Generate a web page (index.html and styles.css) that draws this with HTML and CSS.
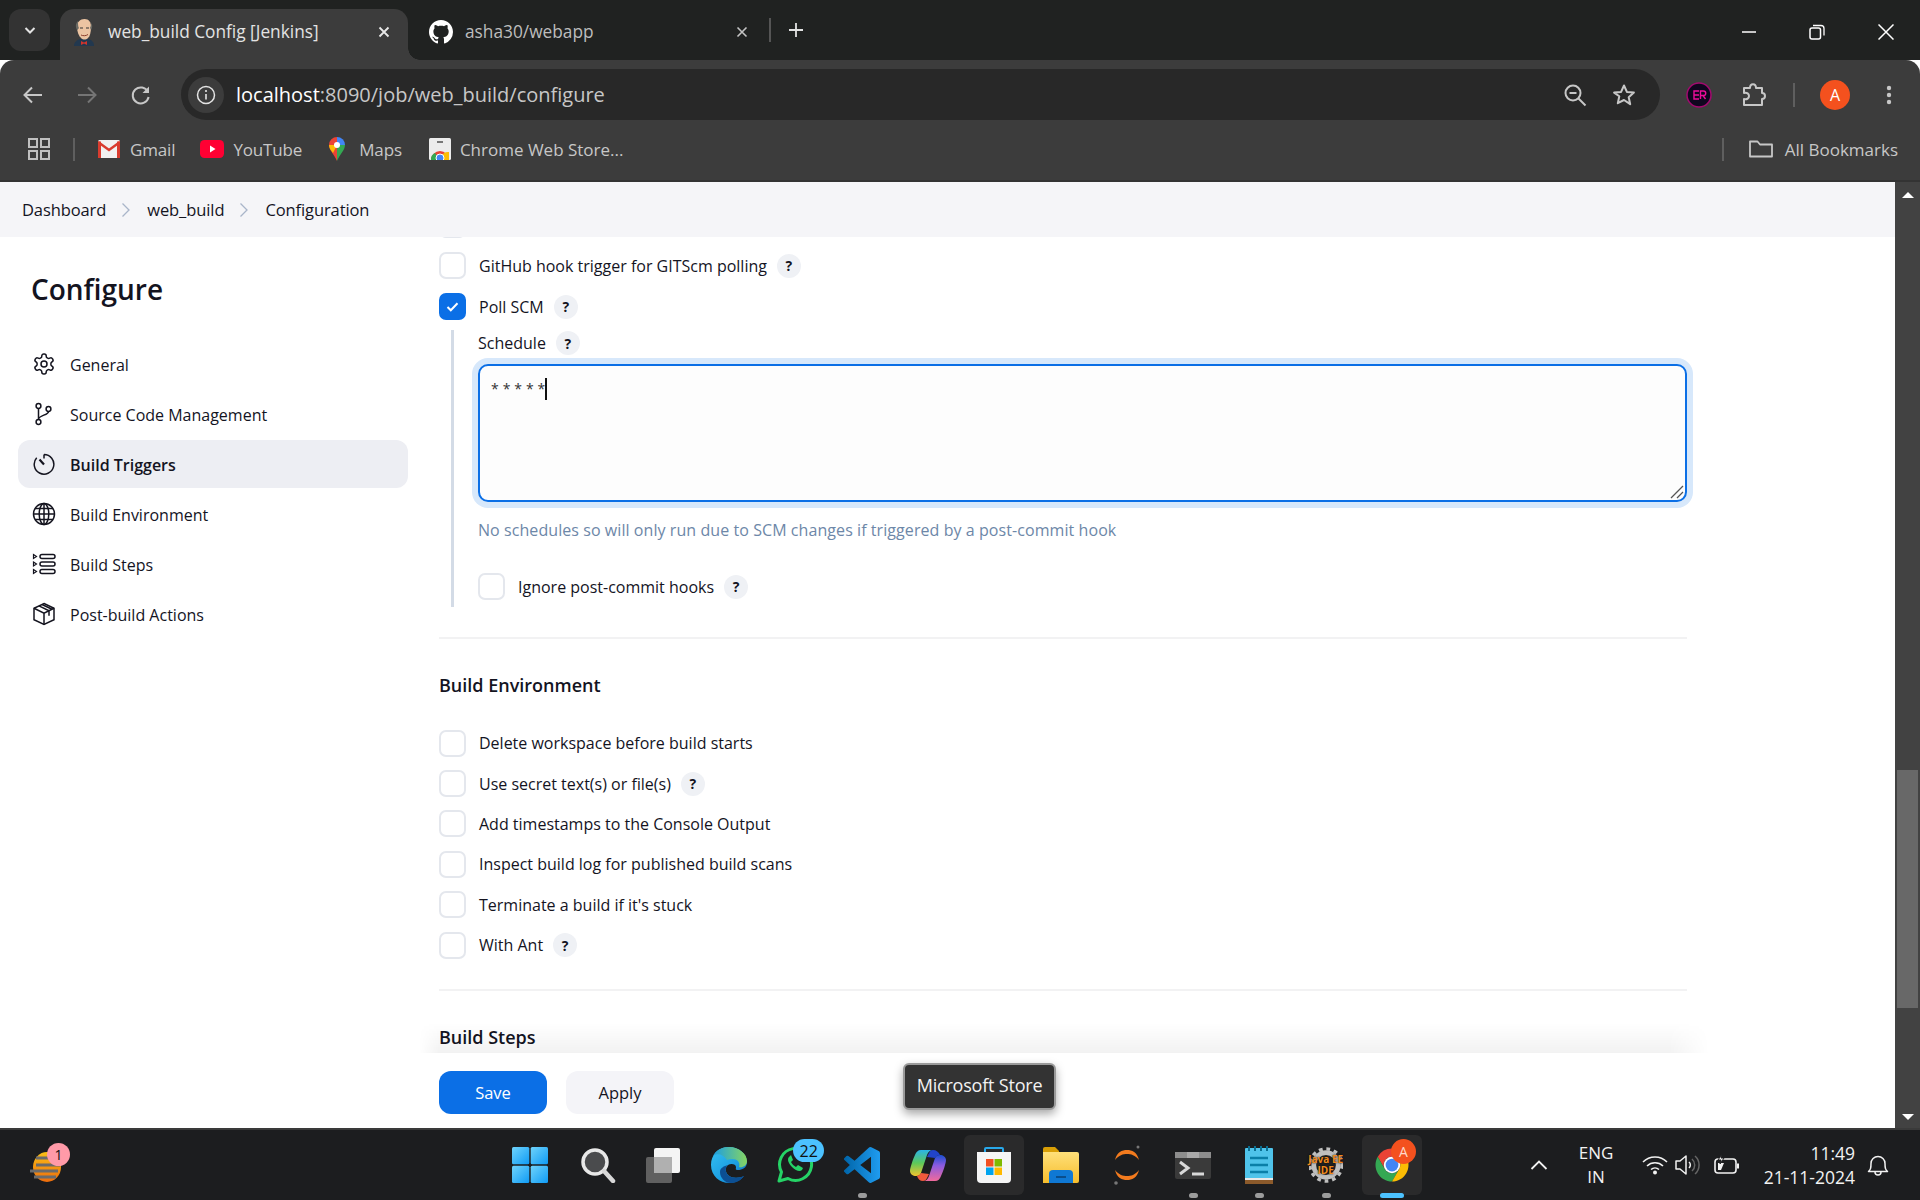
FILE: index.html
```html
<!DOCTYPE html>
<html lang="en">
<head>
    <meta charset="UTF-8">
    <title>web_build Config [Jenkins]</title>
    <link rel="stylesheet" href="styles.css">
</head>
<body>
    <svg width="0" height="0" class="defs">
        <defs>
            <linearGradient id="g-win" x1="0" y1="0" x2="1" y2="1"><stop offset="0" stop-color="#6fd3fb"/><stop offset="1" stop-color="#0f9bf5"/></linearGradient>
            <linearGradient id="g-edge" x1="0" y1="0" x2="1" y2="1"><stop offset="0" stop-color="#35c1f1"/><stop offset=".6" stop-color="#1b9de2"/><stop offset="1" stop-color="#0c59a4"/></linearGradient>
            <linearGradient id="g-edge2" x1="0" y1="0" x2="1" y2="0"><stop offset="0" stop-color="#1b9de2"/><stop offset="1" stop-color="#86d562"/></linearGradient>
            <linearGradient id="g-vs" x1="0" y1="0" x2="1" y2="0"><stop offset="0" stop-color="#0065a9"/><stop offset="1" stop-color="#1f9cf0"/></linearGradient>
            <linearGradient id="g-sun" x1="0" y1="0" x2="0" y2="1"><stop offset="0" stop-color="#fbbf16"/><stop offset="1" stop-color="#ed6c0c"/></linearGradient>
            <linearGradient id="g-co1" x1="0" y1="0" x2="0" y2="1"><stop offset="0" stop-color="#1b4fd0"/><stop offset=".4" stop-color="#8a5be0"/><stop offset="1" stop-color="#f06a9c"/></linearGradient>
            <linearGradient id="g-co2" x1="0" y1="0" x2="0" y2="1"><stop offset="0" stop-color="#2bb3e8"/><stop offset=".5" stop-color="#5cc95a"/><stop offset="1" stop-color="#f3c32e"/></linearGradient>
            <linearGradient id="g-folder" x1="0" y1="0" x2="0" y2="1"><stop offset="0" stop-color="#ffe07a"/><stop offset="1" stop-color="#f6bd2c"/></linearGradient>
        </defs>
    </svg>

    <div class="tabstrip">
        <div class="tab-search">
            <svg width="16" height="16" viewBox="0 0 16 16"><path d="M3.500 6l4.500 4.500L12.500 6" fill="none" stroke="#e3e3e3" stroke-width="2"/></svg>
        </div>
        <div class="tab tab-active">
            <svg class="favicon" width="24" height="28" viewBox="0 0 24 28">
                <path d="M2 28c0-4 3-6 6-7h8c4 1 6 3 6 7z" fill="#22384f"/>
                <path d="M9 23l3 1.500 3-1.500v4l-3-1.500L9 27z" fill="#d0342c"/>
                <path d="M5 9c0-5 3-8 7.500-8S19 4 19 9c0 5-1 9-3 11-2 2-5 2-7 0-2-2-4-6-4-11z" fill="#ecc4a2"/>
                <path d="M5 12C3 8 4 5 6 3c0 3 0 6 1 7-1 1-1.500 2-2 2zM19 12c1.500-2 1.500-5 .5-7-.5 2-1 4-1.500 5 .5.5 1 1.500 1 2z" fill="#6a6a64"/>
                <path d="M9 17c2 1 5 1 7-.5" fill="none" stroke="#8c3f2c" stroke-width="1"/>
                <path d="M8 10h3M14 10h3" stroke="#333" stroke-width="1.200"/>
            </svg>
            <span class="tab-title">web_build Config [Jenkins]</span>
            <svg class="tab-close" width="14" height="14" viewBox="0 0 14 14"><path d="M2.500 2.500l9 9M11.500 2.500l-9 9" stroke="#e8e8e8" stroke-width="1.800"/></svg>
        </div>
        <div class="tab tab-other">
            <svg class="favicon" width="24" height="24" viewBox="0 0 16 16"><path fill="#fff" d="M8 0C3.58 0 0 3.58 0 8c0 3.54 2.29 6.53 5.47 7.59.4.07.55-.17.55-.38 0-.19-.01-.82-.01-1.49-2.01.37-2.53-.49-2.69-.94-.09-.23-.48-.94-.82-1.13-.28-.15-.68-.52-.01-.53.63-.01 1.08.58 1.23.82.72 1.21 1.87.87 2.33.66.07-.52.28-.87.51-1.07-1.78-.2-3.64-.89-3.64-3.95 0-.87.31-1.59.82-2.15-.08-.2-.36-1.02.08-2.12 0 0 .67-.21 2.2.82.64-.18 1.32-.27 2-.27.68 0 1.36.09 2 .27 1.53-1.04 2.2-.82 2.2-.82.44 1.1.16 1.92.08 2.12.51.56.82 1.27.82 2.15 0 3.07-1.87 3.75-3.65 3.95.29.25.54.73.54 1.48 0 1.07-.01 1.93-.01 2.2 0 .21.15.46.55.38A8.013 8.013 0 0016 8c0-4.42-3.58-8-8-8z"/></svg>
            <span class="tab-title">asha30/webapp</span>
            <svg class="tab-close" width="14" height="14" viewBox="0 0 14 14"><path d="M2.500 2.500l9 9M11.500 2.500l-9 9" stroke="#c4c4c4" stroke-width="1.600"/></svg>
        </div>
        <div class="tab-divider"></div>
        <svg class="tab-plus" width="18" height="18" viewBox="0 0 18 18"><path d="M9 2v14M2 9h14" stroke="#e3e3e3" stroke-width="1.800"/></svg>
        <div class="win-controls">
            <div class="win-btn"><svg width="16" height="16" viewBox="0 0 16 16"><path d="M1 8h14" stroke="#fff" stroke-width="1.500"/></svg></div>
            <div class="win-btn"><svg width="16" height="16" viewBox="0 0 16 16"><rect x="1" y="4" width="10.500" height="11" rx="2" fill="none" stroke="#fff" stroke-width="1.500"/><path d="M4 1.500h8a3 3 0 0 1 3 3v7" fill="none" stroke="#fff" stroke-width="1.300"/></svg></div>
            <div class="win-btn"><svg width="16" height="16" viewBox="0 0 16 16"><path d="M.5.500l15 15M15.500.500l-15 15" stroke="#fff" stroke-width="1.500"/></svg></div>
        </div>
    </div>

    <div class="toolbar">
        <div class="nav-btn"><svg width="22" height="22" viewBox="0 0 22 22"><path d="M20 11H3M10 3.500L2.500 11l7.500 7.500" fill="none" stroke="#c7c7c7" stroke-width="2"/></svg></div>
        <div class="nav-btn"><svg width="22" height="22" viewBox="0 0 22 22"><path d="M2 11h17M12 3.500l7.500 7.500-7.500 7.500" fill="none" stroke="#757575" stroke-width="2"/></svg></div>
        <div class="nav-btn"><svg width="22" height="22" viewBox="0 0 22 22"><path d="M18 8a8 8 0 1 0 .6 5" fill="none" stroke="#c7c7c7" stroke-width="2"/><path d="M19 2.500V9h-6.500z" fill="#c7c7c7"/></svg></div>
        <div class="omnibox">
            <div class="site-chip"><svg width="20" height="20" viewBox="0 0 20 20"><circle cx="10" cy="10" r="8.500" fill="none" stroke="#e3e3e3" stroke-width="1.500"/><path d="M10 9v5.500" stroke="#e3e3e3" stroke-width="1.600"/><circle cx="10" cy="6" r="1.100" fill="#e3e3e3"/></svg></div>
            <div class="url"><span class="url-host">localhost</span>:8090/job/web_build/configure</div>
            <svg class="omni-icon" width="24" height="24" viewBox="0 0 24 24"><circle cx="10" cy="10" r="7.500" fill="none" stroke="#c7c7c7" stroke-width="2"/><path d="M6.500 10h7" stroke="#c7c7c7" stroke-width="2"/><path d="M15.500 15.500l7 7" stroke="#c7c7c7" stroke-width="2"/></svg>
            <svg class="omni-icon omni-star" width="24" height="24" viewBox="0 0 24 24"><path d="M12 2.500l2.900 6.400 7 .7-5.200 4.700 1.500 6.900L12 17l-6.200 3.200 1.500-6.900L2.100 9.600l7-.7z" fill="none" stroke="#c7c7c7" stroke-width="2" stroke-linejoin="round"/></svg>
        </div>
        <svg class="ext-icon" width="26" height="26" viewBox="0 0 26 26"><circle cx="13" cy="13" r="12" fill="#10061f" stroke="#a3096f" stroke-width="1.500"/><path d="M13 9H8v8h5M8 13h5M14.500 17V9h3a2 2 0 0 1 0 4.500h-3M17 13.500l2.500 3.500" fill="none" stroke="#ee0c9a" stroke-width="1.400"/></svg>
        <svg class="puzzle-icon" width="26" height="26" viewBox="0 0 26 26"><path d="M3 6h6c0-5 6-5 6 0h6v5c4 0 4 6 0 6v6H3v-6c3 1 5-1 5-3s-2-4-5-3z" fill="none" stroke="#c7c7c7" stroke-width="2" stroke-linejoin="round"/></svg>
        <div class="toolbar-divider"></div>
        <div class="avatar">A</div>
        <svg class="dots-icon" width="24" height="24" viewBox="0 0 24 24"><circle cx="12" cy="5" r="2.200" fill="#c7c7c7"/><circle cx="12" cy="12" r="2.200" fill="#c7c7c7"/><circle cx="12" cy="19" r="2.200" fill="#c7c7c7"/></svg>
    </div>

    <div class="bookmarks">
        <svg width="22" height="22" viewBox="0 0 22 22"><g fill="none" stroke="#c0c0c0" stroke-width="2"><rect x="1" y="1" width="8" height="8"/><rect x="13" y="1" width="8" height="8"/><rect x="1" y="13" width="8" height="8"/><rect x="13" y="13" width="8" height="8"/></g></svg>
        <div class="bm-divider"></div>
        <div class="bm bm-gmail">
            <svg width="22" height="18" viewBox="0 0 22 18"><rect width="22" height="18" rx="1.500" fill="#f1f1f1"/><path d="M0 2l11 8 11-8" fill="none" stroke="#d93c2f" stroke-width="2.500"/><path d="M1.500 1.500V18M20.500 1.500V18" stroke="#d93c2f" stroke-width="3"/></svg>
            <span>Gmail</span>
        </div>
        <div class="bm bm-youtube">
            <svg width="24" height="18" viewBox="0 0 24 18"><rect width="24" height="18" rx="4.500" fill="#ff0033"/><path d="M10 5.500l5.500 3.500-5.500 3.500z" fill="#fff"/></svg>
            <span>YouTube</span>
        </div>
        <div class="bm bm-maps">
            <svg width="16" height="24" viewBox="0 0 16 24"><path d="M8 0a8 8 0 0 0-8 8c0 5 5 9 8 16z" fill="#ea4335"/><path d="M8 0a8 8 0 0 1 8 8L8 8z" fill="#4285f4"/><path d="M16 8c0 5-5 9-8 16V8z" fill="#34a853"/><path d="M0 8c0 3 2 5.500 4 8l4-8z" fill="#fbbc04"/><circle cx="8" cy="8" r="3" fill="#fff"/></svg>
            <span>Maps</span>
        </div>
        <div class="bm bm-store">
            <svg width="22" height="22" viewBox="0 0 22 22"><rect width="22" height="22" rx="1.500" fill="#ececec"/><rect x="8" y="3" width="6" height="2" fill="#777"/><path d="M2 22a9 9 0 0 1 18 0z" fill="#ea4335"/><path d="M12 22a7 7 0 0 1 8-8v8z" fill="#fbbc04"/><path d="M2 22a7 7 0 0 1 4-7l5 7z" fill="#34a853"/><circle cx="11" cy="20" r="4" fill="#4285f4" stroke="#fff"/></svg>
            <span>Chrome Web Store...</span>
        </div>
        <div class="bm-divider bm-divider-right"></div>
        <div class="bm bm-all">
            <svg width="24" height="18" viewBox="0 0 24 18"><path d="M1 16.500V1.500h7.500l2.500 3h12v12z" fill="none" stroke="#c7c7c7" stroke-width="1.800" stroke-linejoin="round"/></svg>
            <span>All Bookmarks</span>
        </div>
    </div>

    <div class="page">
        <div class="page-main">
            <div class="breadcrumb">
                <span>Dashboard</span>
                <svg class="crumb-sep" width="10" height="16" viewBox="0 0 10 16"><path d="M1.500 1.500L8 8l-6.500 6.500" fill="none" stroke="#a9b5c9" stroke-width="1.300"/></svg>
                <span>web_build</span>
                <svg class="crumb-sep" width="10" height="16" viewBox="0 0 10 16"><path d="M1.500 1.500L8 8l-6.500 6.500" fill="none" stroke="#a9b5c9" stroke-width="1.300"/></svg>
                <span>Configuration</span>
            </div>
            <div class="page-body">
                <aside class="sidebar">
                    <h1>Configure</h1>
                    <nav class="side-nav">
                        <a class="side-item">
                            <svg width="24" height="24" viewBox="0 0 24 24" class="side-icon"><path d="M12.220 2h-.44a2 2 0 0 0-2 2v.18a2 2 0 0 1-1 1.730l-.43.25a2 2 0 0 1-2 0l-.15-.08a2 2 0 0 0-2.730.73l-.22.38a2 2 0 0 0 .73 2.730l.15.1a2 2 0 0 1 1 1.720v.51a2 2 0 0 1-1 1.740l-.15.09a2 2 0 0 0-.73 2.730l.22.38a2 2 0 0 0 2.730.73l.15-.08a2 2 0 0 1 2 0l.43.25a2 2 0 0 1 1 1.730V20a2 2 0 0 0 2 2h.44a2 2 0 0 0 2-2v-.18a2 2 0 0 1 1-1.730l.43-.25a2 2 0 0 1 2 0l.15.08a2 2 0 0 0 2.730-.73l.22-.39a2 2 0 0 0-.73-2.730l-.15-.08a2 2 0 0 1-1-1.740v-.5a2 2 0 0 1 1-1.740l.15-.09a2 2 0 0 0 .73-2.730l-.22-.38a2 2 0 0 0-2.730-.73l-.15.08a2 2 0 0 1-2 0l-.43-.25a2 2 0 0 1-1-1.730V4a2 2 0 0 0-2-2z"/><circle cx="12" cy="12" r="3"/></svg>
                            <span>General</span>
                        </a>
                        <a class="side-item">
                            <svg width="24" height="24" viewBox="0 0 24 24" class="side-icon"><circle cx="6.500" cy="4" r="2.400"/><circle cx="6.500" cy="20" r="2.400"/><circle cx="16.500" cy="7" r="2.400"/><path d="M6.500 6.400v11.200M16.500 9.400c0 4-10 3.500-10 8.200"/></svg>
                            <span>Source Code Management</span>
                        </a>
                        <a class="side-item side-item-active">
                            <svg width="24" height="24" viewBox="0 0 24 24" class="side-icon"><path d="M12 2.500a9.800 9.800 0 1 1-7.300 3.300M12 2.500v4"/><path d="M12 12.500L7.500 7.500" stroke-width="2.200"/></svg>
                            <span>Build Triggers</span>
                        </a>
                        <a class="side-item">
                            <svg width="24" height="24" viewBox="0 0 24 24" class="side-icon"><circle cx="12" cy="12" r="10.500"/><ellipse cx="12" cy="12" rx="4.800" ry="10.500"/><path d="M12 1.500v21M1.500 12h21M3 6.500h18M3 17.500h18"/></svg>
                            <span>Build Environment</span>
                        </a>
                        <a class="side-item">
                            <svg width="24" height="24" viewBox="0 0 24 24" class="side-icon"><rect x="8" y="2.500" width="15" height="4" rx="2"/><rect x="8" y="10" width="15" height="4" rx="2"/><rect x="8" y="17.500" width="15" height="4" rx="2"/><path d="M1.500 2.500l3 2-3 2zM1.500 10l3 2-3 2zM1.500 17.500l3 2-3 2z" stroke-width="1.200"/></svg>
                            <span>Build Steps</span>
                        </a>
                        <a class="side-item">
                            <svg width="24" height="24" viewBox="0 0 24 24" class="side-icon"><path d="M12 1.500l10 4.800v11.400L12 22.500 2 17.700V6.300z"/><path d="M2 6.300l10 4.800 10-4.800M12 11.100v11.400M7 3.900l10 4.800v5M10 2.500l10 4.800"/></svg>
                            <span>Post-build Actions</span>
                        </a>
                    </nav>
                </aside>

                <div class="content-col">
                    <main class="content">
                        <div class="check-row"><span class="check"></span></div>
                        <div class="check-row"><span class="check"></span><span>GitHub hook trigger for GITScm polling</span><span class="help">?</span></div>
                        <div class="check-row"><span class="check check-on"><svg width="15" height="15" viewBox="0 0 15 15"><path d="M2.500 8l3.300 3.300 6.700-7" fill="none" stroke="#fff" stroke-width="2"/></svg></span><span>Poll SCM</span><span class="help">?</span></div>

                        <div class="nested">
                            <div class="field-label"><span>Schedule</span><span class="help">?</span></div>
                            <div class="schedule-box">
                                <span class="schedule-text">* * * * *</span><span class="caret"></span>
                                <svg class="resize-grip" width="14" height="14" viewBox="0 0 14 14"><path d="M1 13L13 1M7 13l6-6" stroke="#555" stroke-width="1.300"/></svg>
                            </div>
                            <div class="hint">No schedules so will only run due to SCM changes if triggered by a post-commit hook</div>
                            <div class="check-row ignore-row"><span class="check"></span><span>Ignore post-commit hooks</span><span class="help">?</span></div>
                        </div>

                        <hr class="section-line line-first">
                        <h2>Build Environment</h2>
                        <div class="env-list">
                            <div class="check-row"><span class="check"></span><span>Delete workspace before build starts</span></div>
                            <div class="check-row"><span class="check"></span><span>Use secret text(s) or file(s)</span><span class="help">?</span></div>
                            <div class="check-row"><span class="check"></span><span>Add timestamps to the Console Output</span></div>
                            <div class="check-row"><span class="check"></span><span>Inspect build log for published build scans</span></div>
                            <div class="check-row"><span class="check"></span><span>Terminate a build if it's stuck</span></div>
                            <div class="check-row"><span class="check"></span><span>With Ant</span><span class="help">?</span></div>
                        </div>
                        <hr class="section-line">
                        <h2>Build Steps</h2>
                    </main>
                    <footer class="save-bar">
                        <button class="btn btn-save">Save</button>
                        <button class="btn btn-apply">Apply</button>
                    </footer>
                </div>
            </div>
        </div>
        <div class="scrollbar">
            <span class="arrow-up"></span>
            <div class="scroll-track"><div class="scroll-thumb"></div></div>
            <span class="arrow-down"></span>
        </div>
        <div class="tooltip">Microsoft Store</div>
    </div>

    <div class="taskbar">
        <div class="widget">
            <svg width="36" height="34" viewBox="0 0 36 34"><ellipse cx="19" cy="19" rx="14" ry="15" fill="url(#g-sun)"/><g stroke="#6b6b6b" stroke-width="3"><path d="M8 10h16M8 17h24M2 23h28M6 29h22"/></g></svg>
            <span class="widget-badge">1</span>
        </div>
        <div class="task-apps">
            <div class="task-app">
                <svg width="36" height="36" viewBox="0 0 36 36"><g fill="url(#g-win)"><rect x="0" y="0" width="17.300" height="17.300" rx="1.500"/><rect x="18.700" y="0" width="17.300" height="17.300" rx="1.500"/><rect x="0" y="18.700" width="17.300" height="17.300" rx="1.500"/><rect x="18.700" y="18.700" width="17.300" height="17.300" rx="1.500"/></g></svg>
            </div>
            <div class="task-app task-search-icon">
                <svg width="36" height="36" viewBox="0 0 36 36"><circle cx="15" cy="15" r="12" fill="#4a4b4d" stroke="#e8e8e8" stroke-width="3.500"/><path d="M24 24l9 10" stroke="#d8d8d8" stroke-width="4.500" stroke-linecap="round"/></svg>
            </div>
            <div class="task-app">
                <svg width="36" height="36" viewBox="0 0 36 36"><rect x="1" y="10" width="26" height="26" rx="2" fill="#606060"/><rect x="9" y="1" width="26" height="25" rx="2" fill="#f4f4f4"/><rect x="9" y="10" width="18" height="16" fill="#b0b0b0"/></svg>
            </div>
            <div class="task-app">
                <svg width="38" height="38" viewBox="0 0 38 38"><path d="M19 1C8 1 1 9 1 19c0 11 9 18 18 18 7 0 12-3 15-7-4 2-12 3-16-1-3-3-3-8 0-10 3-2 8-1 8 2 0 2-1 3 2 3 4 0 9-2 9-8C37 8 29 1 19 1z" fill="url(#g-edge)"/><path d="M17 14c8-3 14 1 12 7 3 1 8-1 8-6C37 8 29 1 19 1 12 1 6 4 3 10c4-3 10-2 14 4z" fill="url(#g-edge2)"/><path d="M10 26c0 6 5 11 11 11 6 0 10-3 13-7-4 2-12 3-16-1-3-3-3-8 0-10-4 1-8 3-8 7z" fill="#0c4f93"/></svg>
            </div>
            <div class="task-app">
                <svg width="38" height="38" viewBox="0 0 38 38"><path d="M3 35l2.500-9A16 16 0 1 1 12 32.500z" fill="none" stroke="#25d366" stroke-width="3" stroke-linejoin="round"/><path d="M13 11c-2 2-1 6 3 10s8 5 10 3l1-2-5-3-2 2c-2-1-4-3-5-5l2-2-2-5z" fill="#25d366"/></svg>
                <span class="task-badge">22</span>
            </div>
            <div class="task-app task-open">
                <svg width="36" height="36" viewBox="0 0 24 24"><path fill="url(#g-vs)" d="M23.150 2.587L18.210.21a1.494 1.494 0 0 0-1.705.29l-9.460 8.630-4.120-3.128a.999.999 0 0 0-1.276.057L.327 7.261A1 1 0 0 0 .326 8.740L3.899 12 .326 15.260a1 1 0 0 0 .001 1.479L1.650 17.940a.999.999 0 0 0 1.276.057l4.120-3.128 9.460 8.630a1.492 1.492 0 0 0 1.704.29l4.942-2.377A1.500 1.500 0 0 0 24 20.060V3.939a1.500 1.500 0 0 0-.85-1.352zm-5.146 14.861L10.826 12l7.178-5.448v10.896z"/></svg>
            </div>
            <div class="task-app">
                <svg width="36" height="33" viewBox="0 0 36 33"><path d="M11 1h12c-3 0-5 2-6 5l-6 18c-1 2-2 3-5 3-3 0-6-2-6-5 0-3 3-12 5-16 1-3 3-5 6-5z" fill="url(#g-co2)"/><path d="M25 32H13c3 0 5-2 6-5l6-18c1-2 2-3 5-3 3 0 6 2 6 5 0 3-3 12-5 16-1 3-3 5-6 5z" fill="url(#g-co1)"/><path d="M23 1c-2 0-3 1-4 3l-2 4 8 1c1-2 3-3 5-3-1-3-4-5-7-5z" fill="#2144c8"/><path d="M13 32c2 0 3-1 4-3l2-4-8-1c-1 2-3 3-4 3 1 3 3 5 6 5z" fill="#f0593c"/></svg>
            </div>
            <div class="task-app task-active">
                <svg width="36" height="38" viewBox="0 0 36 38"><path d="M9 6V3a1 1 0 0 1 1-1h16a1 1 0 0 1 1 1v3" fill="none" stroke="#28a8ea" stroke-width="2"/><path d="M1 6h34v27a4 4 0 0 1-4 4H5a4 4 0 0 1-4-4z" fill="#f5f5f5"/><rect x="10" y="13" width="7.500" height="7.500" fill="#f25022"/><rect x="18.500" y="13" width="7.500" height="7.500" fill="#7fba00"/><rect x="10" y="21.500" width="7.500" height="7.500" fill="#00a4ef"/><rect x="18.500" y="21.500" width="7.500" height="7.500" fill="#ffb900"/></svg>
            </div>
            <div class="task-app">
                <svg width="36" height="36" viewBox="0 0 36 36"><path d="M0 2a2 2 0 0 1 2-2h10l4 4v10H0z" fill="#d99f06"/><path d="M0 5h34a2 2 0 0 1 2 2v27a2 2 0 0 1-2 2H0z" fill="url(#g-folder)"/><path d="M6 36v-9a4 4 0 0 1 4-4h16a4 4 0 0 1 4 4v9z" fill="#0f78d4"/><path d="M13 30h10" stroke="#0a4e8d" stroke-width="2"/></svg>
            </div>
            <div class="task-app">
                <svg width="30" height="40" viewBox="0 0 30 40"><path d="M3 15C5 7 10 5 15 5s10 2 12 10c-4-5-8-6-12-6S7 10 3 15zM3 25c2 8 7 10 12 10s10-2 12-10c-4 5-8 6-12 6S7 30 3 25z" fill="#f37b1e"/><circle cx="26" cy="2" r="1.500" fill="#777"/><circle cx="4" cy="38" r="1.800" fill="#777"/></svg>
            </div>
            <div class="task-app task-open">
                <svg width="36" height="27" viewBox="0 0 36 27"><rect width="36" height="27" rx="2" fill="#3a3a3a"/><rect width="36" height="6" fill="#8d8d8d"/><rect x="12" width="12" height="6" fill="#a9a9a9"/><path d="M5 10l8 6-8 6" fill="none" stroke="#d8d8d8" stroke-width="3"/><path d="M17 22h12" stroke="#d8d8d8" stroke-width="3"/></svg>
            </div>
            <div class="task-app task-open">
                <svg width="28" height="38" viewBox="0 0 28 38"><rect y="2" width="28" height="32" rx="1" fill="#4fc3ea"/><rect y="33" width="28" height="5" fill="#8b5a2b"/><rect y="32" width="28" height="2" fill="#e8e8e8"/><path d="M5 12h18M5 19h18M5 26h18" stroke="#0a7fa8" stroke-width="2.500"/><path d="M4 0v5M10 0v5M16 0v5M22 0v5" stroke="#0a6f92" stroke-width="2"/></svg>
            </div>
            <div class="task-app task-open">
                <svg width="34" height="36" viewBox="0 0 36 38"><circle cx="18" cy="19" r="13" fill="#222" stroke="#bfbfbf" stroke-width="5"/><circle cx="18" cy="19" r="17" fill="none" stroke="#bfbfbf" stroke-width="3.500" stroke-dasharray="4 4"/></svg>
                <span class="java-label">Java EE<br>IDE</span>
            </div>
            <div class="task-app task-active task-chrome">
                <svg width="36" height="36" viewBox="0 0 48 48"><path d="M24 2A22 22 0 0 0 4.950 13l9.520 16.500A11 11 0 0 1 24 13h19.050A22 22 0 0 0 24 2z" fill="#ea4335"/><path d="M4.950 13A22 22 0 0 0 24 46l9.530-16.500a11 11 0 0 1-19.060 0z" fill="#34a853"/><path d="M43.050 13H24a11 11 0 0 1 9.530 16.500L24 46a22 22 0 0 0 19.050-33z" fill="#fbbc04"/><circle cx="24" cy="24" r="11" fill="#fff"/><circle cx="24" cy="24" r="8.500" fill="#4285f4"/></svg>
                <span class="chrome-badge">A</span>
            </div>
        </div>
        <div class="tray">
            <svg class="tray-chevron" width="18" height="12" viewBox="0 0 18 12"><path d="M1.500 10L9 2.500 16.500 10" fill="none" stroke="#f2f2f2" stroke-width="1.800"/></svg>
            <div class="tray-lang">ENG<br>IN</div>
            <svg class="tray-wifi" width="26" height="20" viewBox="0 0 26 20"><g fill="none" stroke="#f2f2f2" stroke-width="1.600"><path d="M1 7a17 17 0 0 1 24 0"/><path d="M5 11a11.500 11.500 0 0 1 16 0"/><path d="M9 14.500a6 6 0 0 1 8 0"/></g><circle cx="13" cy="17.500" r="2" fill="#f2f2f2"/></svg>
            <svg class="tray-vol" width="26" height="22" viewBox="0 0 26 22"><path d="M1 7h4l6-5v18l-6-5H1z" fill="none" stroke="#f2f2f2" stroke-width="1.500" stroke-linejoin="round"/><path d="M14 8a4 4 0 0 1 0 6" fill="none" stroke="#f2f2f2" stroke-width="1.500"/><path d="M17 5a8 8 0 0 1 0 12M20 2a12 12 0 0 1 0 18" fill="none" stroke="#666" stroke-width="1.500"/></svg>
            <svg class="tray-batt" width="26" height="22" viewBox="0 0 26 22"><rect x="1" y="5" width="21" height="14" rx="3" fill="none" stroke="#f2f2f2" stroke-width="1.600"/><path d="M23 9.500h2v5h-2z" fill="#f2f2f2"/><path d="M4 16V9h6l-3 7z" fill="#f2f2f2"/><path d="M8 0L4 6h3l-1 4 4-6H7z" fill="#f2f2f2" stroke="#1c1d1f"/></svg>
            <div class="tray-clock">11:49<br>21-11-2024</div>
            <svg class="tray-bell" width="22" height="24" viewBox="0 0 22 24"><path d="M1.500 18.500c2-2 2.500-3 2.500-8a7 7 0 0 1 14 0c0 5 .5 6 2.500 8z" fill="none" stroke="#f2f2f2" stroke-width="1.500" stroke-linejoin="round"/><path d="M8 19a3 3 0 0 0 6 0" fill="none" stroke="#f2f2f2" stroke-width="1.500"/></svg>
        </div>
    </div>
</body>
</html>
```

FILE: styles.css
```css
* {
    box-sizing: border-box;
}

html, body {
    margin: 0;
    padding: 0;
}

body {
    width: 1920px;
    height: 1200px;
    overflow: hidden;
    display: flex;
    flex-direction: column;
    font-family: "Open Sans", "Noto Sans", sans-serif;
    font-size: 16px;
    color: #14141f;
    background-color: #fff;
}

.defs {
    position: absolute;
}

/* browser chrome */
.tabstrip {
    height: 60px;
    flex: none;
    display: flex;
    align-items: flex-end;
    padding-left: 9px;
    background-color: #202221;
}

.tab-search {
    width: 41px;
    height: 42px;
    margin-bottom: 9px;
    display: flex;
    align-items: center;
    justify-content: center;
    background-color: #333;
    border-radius: 12px;
}

.tab {
    height: 51px;
    padding-bottom: 6px;
    display: flex;
    align-items: center;
    font-size: 17.300px;
}

.tab-active {
    width: 348px;
    margin-left: 10px;
    padding-left: 12px;
    padding-right: 17px;
    position: relative;
    color: #e3e3e3;
    background-color: #3c3c3c;
    border-radius: 14px 14px 0 0;
}

.tab-active::after {
    content: "";
    position: absolute;
    right: -12px;
    bottom: 0;
    width: 12px;
    height: 12px;
    background: radial-gradient(circle at 100% 0, transparent 11.500px, #3c3c3c 12px);
}

.tab-other {
    width: 358px;
    padding-left: 21px;
    padding-right: 17px;
    color: #bdbdbd;
}

.tab-title {
    margin-left: 12px;
    flex: 1;
}

.tab-divider {
    width: 2px;
    height: 24px;
    margin: 0 0 18px 3px;
    background-color: #555;
}

.tab-plus {
    margin: 0 0 21px 16px;
}

.win-controls {
    margin-left: auto;
    align-self: stretch;
    display: flex;
}

.win-btn {
    width: 68px;
    padding: 4px 0 0 1px;
    display: flex;
    align-items: center;
    justify-content: center;
}

.win-btn:last-child {
    width: 70px;
}

.toolbar {
    height: 60px;
    flex: none;
    display: flex;
    align-items: center;
    padding: 9px 0 0 6px;
    background-color: #3c3c3c;
    border-radius: 14px 14px 0 0;
}

.nav-btn {
    width: 54px;
    display: flex;
    justify-content: center;
}

.omnibox {
    width: 1479px;
    height: 51px;
    margin-left: 13px;
    padding: 0 24px 0 7px;
    display: flex;
    align-items: center;
    background-color: #282828;
    border-radius: 26px;
}

.site-chip {
    width: 36px;
    height: 36px;
    display: flex;
    align-items: center;
    justify-content: center;
    background-color: #3c3c3c;
    border-radius: 50%;
}

.url {
    margin-left: 12px;
    flex: 1;
    font-size: 20px;
    color: #c7c7c7;
}

.url-host {
    color: #fff;
}

.omni-star {
    margin-left: 25px;
}

.ext-icon {
    margin-left: 26px;
}

.puzzle-icon {
    margin-left: 29px;
}

.toolbar-divider {
    width: 2px;
    height: 24px;
    margin-left: 26px;
    background-color: #5f5f5f;
}

.avatar {
    width: 30px;
    height: 30px;
    margin-left: 25px;
    display: flex;
    align-items: center;
    justify-content: center;
    font-size: 16px;
    color: #fff;
    background-color: #f4511e;
    border-radius: 50%;
}

.dots-icon {
    margin-left: 27px;
}

.bookmarks {
    height: 62px;
    flex: none;
    display: flex;
    align-items: center;
    padding: 0 22px 2px 28px;
    font-size: 17px;
    letter-spacing: -0.15px;
    color: #c7c7c7;
    background-color: #3c3c3c;
    border-bottom: 2px solid #333;
}

.bm {
    display: flex;
    align-items: center;
    gap: 10px;
}

.bm-divider {
    width: 2px;
    height: 23px;
    margin: 0 23px;
    background-color: #5f5f5f;
}

.bm-youtube {
    margin-left: 25px;
    gap: 9px;
}

.bm-maps {
    margin-left: 27px;
    gap: 14px;
}

.bm-store {
    margin-left: 27px;
    gap: 9px;
    letter-spacing: 0;
}

.bm-divider-right {
    margin-left: auto;
    margin-right: 25px;
}

.bm-all {
    gap: 12px;
    letter-spacing: 0;
}

/* page */
.page {
    flex: 1;
    min-height: 0;
    display: flex;
    position: relative;
    overflow: hidden;
}

.page-main {
    flex: 1;
    min-width: 0;
    display: flex;
    flex-direction: column;
}

.breadcrumb {
    height: 55px;
    flex: none;
    display: flex;
    align-items: center;
    padding-left: 22px;
    font-size: 16.500px;
    font-weight: 500;
    letter-spacing: -0.1px;
    background-color: #f5f5f8;
}

.crumb-sep {
    margin: 0 16px 0 15px;
}

.page-body {
    flex: 1;
    min-height: 0;
    display: flex;
}

.sidebar {
    width: 439px;
    flex: none;
    padding: 32px 31px 0 18px;
}

h1 {
    margin: 0 0 31px 13px;
    font-size: 28px;
    line-height: 40px;
    font-weight: 600;
}

.side-nav {
    display: flex;
    flex-direction: column;
    gap: 2px;
}

.side-item {
    height: 48px;
    display: flex;
    align-items: center;
    gap: 13px;
    padding-left: 15px;
    border-radius: 12px;
}

.side-item span {
    margin-top: 2px;
}

.side-item-active {
    font-weight: 600;
    background-color: #edeef3;
}

.side-icon {
    margin-left: -1px;
    margin-right: 1px;
    fill: none;
    stroke: #14141f;
    stroke-width: 1.500;
}

.content-col {
    flex: 1;
    min-width: 0;
    display: flex;
    flex-direction: column;
}

.content {
    flex: 1;
    min-height: 0;
    overflow: hidden;
    padding-right: 208px;
}

.check-row {
    height: 41px;
    display: flex;
    align-items: center;
}

.content > .check-row:first-child {
    margin-top: -33px;
}

.check {
    width: 27px;
    height: 27px;
    flex: none;
    margin-right: 13px;
    display: flex;
    align-items: center;
    justify-content: center;
    background-color: #fff;
    border: 2px solid #e4e7ed;
    border-radius: 7px;
}

.check-on {
    background-color: #0b6fe6;
    border-color: #0b6fe6;
}

.help {
    width: 24px;
    height: 24px;
    flex: none;
    margin-left: 10px;
    display: flex;
    align-items: center;
    justify-content: center;
    font-size: 14px;
    font-weight: 700;
    background-color: #eff1f5;
    border-radius: 50%;
}

.nested {
    margin: 3px 0 0 12px;
    padding: 1px 0 0 24px;
    border-left: 3px solid #d3dbe6;
}

.field-label {
    height: 24px;
    display: flex;
    align-items: center;
}

.schedule-box {
    height: 138px;
    margin-top: 9px;
    padding: 12px 11px;
    position: relative;
    display: flex;
    align-items: flex-start;
    background-color: #fdfdfd;
    border: 2px solid #0b6fe6;
    border-radius: 10px;
    box-shadow: 0 0 0 6px #d7e8fb;
}

.schedule-text {
    font-size: 14px;
    line-height: 22px;
    word-spacing: 0.300px;
    color: #333;
}

.caret {
    width: 1.500px;
    height: 22px;
    background-color: #111;
}

.resize-grip {
    position: absolute;
    right: 1px;
    bottom: 1px;
}

.hint {
    height: 22px;
    margin-top: 17px;
    line-height: 22px;
    letter-spacing: 0.07px;
    color: #6d87a8;
}

.ignore-row {
    margin-top: 25px;
}

.section-line {
    height: 2px;
    margin: 24px 0 0;
    background-color: #f2f2f3;
    border: none;
}

.line-first {
    margin-top: 30px;
}

h2 {
    margin: 33px 0 0;
    font-size: 18px;
    line-height: 26px;
    font-weight: 600;
}

.env-list {
    margin-top: 25px;
}

.env-list .check-row {
    height: 40.400px;
}

.save-bar {
    height: 75px;
    flex: none;
    display: flex;
    align-items: center;
    gap: 19px;
    padding-top: 3px;
    position: relative;
    background-color: #fff;
}

.save-bar::before {
    content: "";
    position: absolute;
    top: -30px;
    left: -20px;
    width: 1290px;
    height: 30px;
    background: linear-gradient(to bottom, rgba(0, 0, 0, 0), rgba(0, 0, 0, 0.05));
    -webkit-mask-image: linear-gradient(to right, transparent, #000 20px, #000 1250px, transparent);
}

.btn {
    width: 108px;
    height: 43px;
    font-family: inherit;
    font-size: 16.500px;
    border: none;
    border-radius: 12px;
}

.btn-save {
    color: #fff;
    background-color: #0b6fe6;
}

.btn-apply {
    color: #14141f;
    background-color: #f4f4f8;
}

.scrollbar {
    width: 25px;
    flex: none;
    display: flex;
    flex-direction: column;
    align-items: center;
    padding: 10px 0 8px;
    background-color: #424242;
}

.arrow-up,
.arrow-down {
    width: 0;
    height: 0;
    border-left: 6px solid transparent;
    border-right: 6px solid transparent;
}

.arrow-up {
    border-bottom: 6px solid #fff;
}

.arrow-down {
    border-top: 6px solid #fff;
}

.scroll-track {
    flex: 1;
    width: 100%;
    padding: 572px 2px 0;
}

.scroll-thumb {
    height: 238px;
    background-color: #686868;
}

.tooltip {
    position: absolute;
    left: 903px;
    top: 881px;
    width: 153px;
    height: 47px;
    padding-bottom: 3px;
    display: flex;
    align-items: center;
    justify-content: center;
    font-size: 18px;
    letter-spacing: -0.2px;
    color: #f2f2f2;
    background-color: #333;
    border: 2px solid #9a9a9a;
    border-radius: 6px;
    box-shadow: 0 4px 10px rgba(0, 0, 0, 0.35);
}

/* windows taskbar */
.taskbar {
    height: 72px;
    flex: none;
    display: flex;
    align-items: center;
    color: #f2f2f2;
    background-color: #1c1d1f;
    border-top: 2px solid #3a3a3a;
}

.widget {
    width: 497px;
    flex: none;
    padding: 4px 0 0 28px;
    position: relative;
}

.widget-badge {
    position: absolute;
    left: 47px;
    top: -1px;
    width: 23px;
    height: 23px;
    display: flex;
    align-items: center;
    justify-content: center;
    font-size: 14px;
    color: #111;
    background-color: #ff9aa8;
    border-radius: 50%;
}

.task-apps {
    display: flex;
}

.task-app {
    width: 66.300px;
    height: 60px;
    position: relative;
    display: flex;
    align-items: center;
    justify-content: center;
}

.task-search-icon svg {
    margin-left: 3px;
}

.task-active::before {
    content: "";
    position: absolute;
    left: 3px;
    right: 3px;
    top: 0;
    bottom: 0;
    background-color: #2a2a2b;
    border-radius: 6px;
}

.task-app svg {
    position: relative;
}

.task-open::after {
    content: "";
    position: absolute;
    left: 50%;
    bottom: -3px;
    width: 9px;
    height: 5px;
    margin-left: -4px;
    background-color: #9c9c9c;
    border-radius: 3px;
}

.task-chrome::after {
    content: "";
    position: absolute;
    left: 50%;
    bottom: -3px;
    width: 24px;
    height: 5px;
    margin-left: -12px;
    background-color: #4cc2ff;
    border-radius: 3px;
}

.task-badge {
    position: absolute;
    left: 31px;
    top: 4px;
    width: 31px;
    height: 23px;
    display: flex;
    align-items: center;
    justify-content: center;
    font-size: 16px;
    color: #111;
    background-color: #4cc2ff;
    border-radius: 12px;
}

.chrome-badge {
    position: absolute;
    left: 32px;
    top: 4px;
    width: 25px;
    height: 25px;
    display: flex;
    align-items: center;
    justify-content: center;
    font-size: 14px;
    color: #ffd9c9;
    background-color: #f4511e;
    border-radius: 50%;
}

.java-label {
    position: absolute;
    left: 0;
    right: 0;
    top: 19px;
    font-size: 10px;
    font-weight: 700;
    line-height: 11px;
    text-align: center;
    color: #f08a1d;
    text-shadow: 0 0 2px #000;
}

.tray {
    margin-left: auto;
    display: flex;
    align-items: center;
    font-size: 17px;
    line-height: 24px;
}

.tray-chevron {
    margin-right: 18px;
}

.tray-lang {
    width: 60px;
    text-align: center;
    margin-right: 16px;
}

.tray-wifi {
    margin-right: 7px;
}

.tray-vol {
    margin-right: 13px;
}

.tray-clock {
    width: 115px;
    font-size: 17.500px;
    text-align: right;
}

.tray-bell {
    margin: 0 31px 0 12px;
}
```
